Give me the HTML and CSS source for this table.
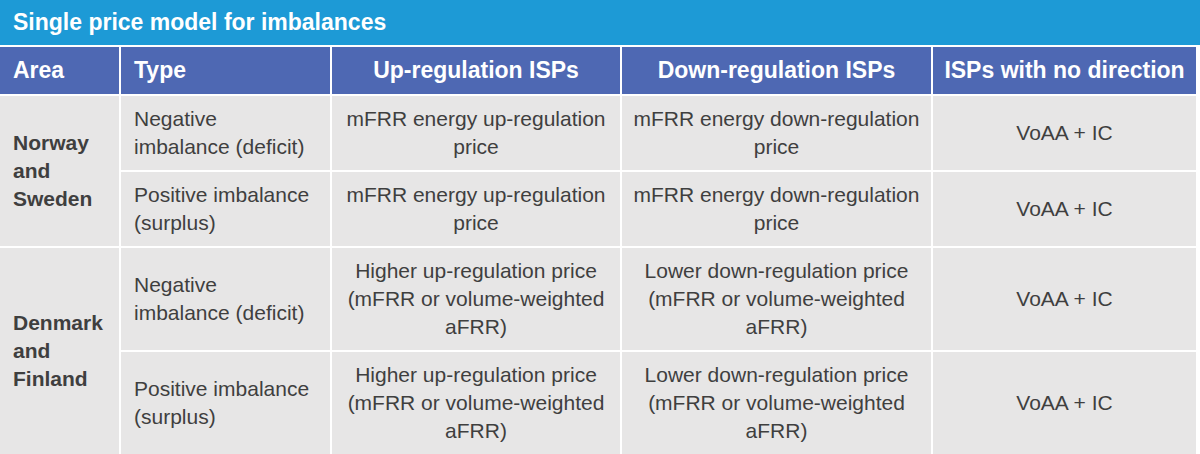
FILE: index.html
```html
<!DOCTYPE html>
<html lang="en">
<head>
<meta charset="utf-8">
<title>Single price model for imbalances</title>
<link rel="stylesheet" href="styles.css">
</head>
<body>
<div class="title">Single price model for imbalances</div>
<table class="grid">
  <colgroup>
    <col class="c-area">
    <col class="c-type">
    <col class="c-up">
    <col class="c-down">
    <col class="c-none">
  </colgroup>
  <thead>
    <tr class="head">
      <th class="first left">Area</th>
      <th class="left">Type</th>
      <th>Up-regulation ISPs</th>
      <th>Down-regulation ISPs</th>
      <th>ISPs with no direction</th>
    </tr>
  </thead>
  <tbody>
    <tr class="r-short">
      <td class="first area" rowspan="2">Norway<br>and<br>Sweden</td>
      <td class="left">Negative<br>imbalance (deficit)</td>
      <td>mFRR energy up-regulation<br>price</td>
      <td>mFRR energy down-regulation<br>price</td>
      <td>VoAA + IC</td>
    </tr>
    <tr class="r-short">
      <td class="left">Positive imbalance<br>(surplus)</td>
      <td>mFRR energy up-regulation<br>price</td>
      <td>mFRR energy down-regulation<br>price</td>
      <td>VoAA + IC</td>
    </tr>
    <tr class="r-tall">
      <td class="first area" rowspan="2">Denmark<br>and<br>Finland</td>
      <td class="left">Negative<br>imbalance (deficit)</td>
      <td>Higher up-regulation price<br>(mFRR or volume-weighted<br>aFRR)</td>
      <td>Lower down-regulation price<br>(mFRR or volume-weighted<br>aFRR)</td>
      <td>VoAA + IC</td>
    </tr>
    <tr class="r-tall">
      <td class="left">Positive imbalance<br>(surplus)</td>
      <td>Higher up-regulation price<br>(mFRR or volume-weighted<br>aFRR)</td>
      <td>Lower down-regulation price<br>(mFRR or volume-weighted<br>aFRR)</td>
      <td>VoAA + IC</td>
    </tr>
  </tbody>
</table>
</body>
</html>
```

FILE: styles.css
```css
html, body {
  margin: 0;
  padding: 0;
  background: #ffffff;
}

body {
  font-family: "Liberation Sans", Arial, sans-serif;
  color: #3f3f3f;
  width: 1200px;
  height: 454px;
  overflow: hidden;
}

.title {
  height: 45px;
  background: #1d9ad6;
  color: #ffffff;
  font-weight: bold;
  font-size: 23px;
  line-height: 45px;
  padding-left: 13px;
  border-bottom: 2px solid #ffffff;
}

.grid {
  border-collapse: collapse;
  table-layout: fixed;
  width: 1196px;
}

.c-area { width: 120px; }
.c-type { width: 211px; }
.c-up { width: 290px; }
.c-down { width: 311px; }
.c-none { width: 264px; }

.grid th,
.grid td {
  padding: 0 6px;
  text-align: center;
  vertical-align: middle;
  border-left: 2px solid #ffffff;
  border-bottom: 2px solid #ffffff;
}

.grid .first {
  border-left: none;
}

.grid .left {
  text-align: left;
  padding-left: 13px;
}

.head th {
  height: 47px;
  background: #4e68b3;
  color: #ffffff;
  font-size: 23px;
  font-weight: bold;
  white-space: nowrap;
}

.grid td {
  background: #e7e6e6;
  font-size: 21px;
  line-height: 28px;
  white-space: nowrap;
}

.grid td.area {
  font-weight: bold;
  text-align: left;
  padding-left: 13px;
}

.r-short td {
  height: 74px;
}

.r-tall td {
  height: 102px;
}
```
